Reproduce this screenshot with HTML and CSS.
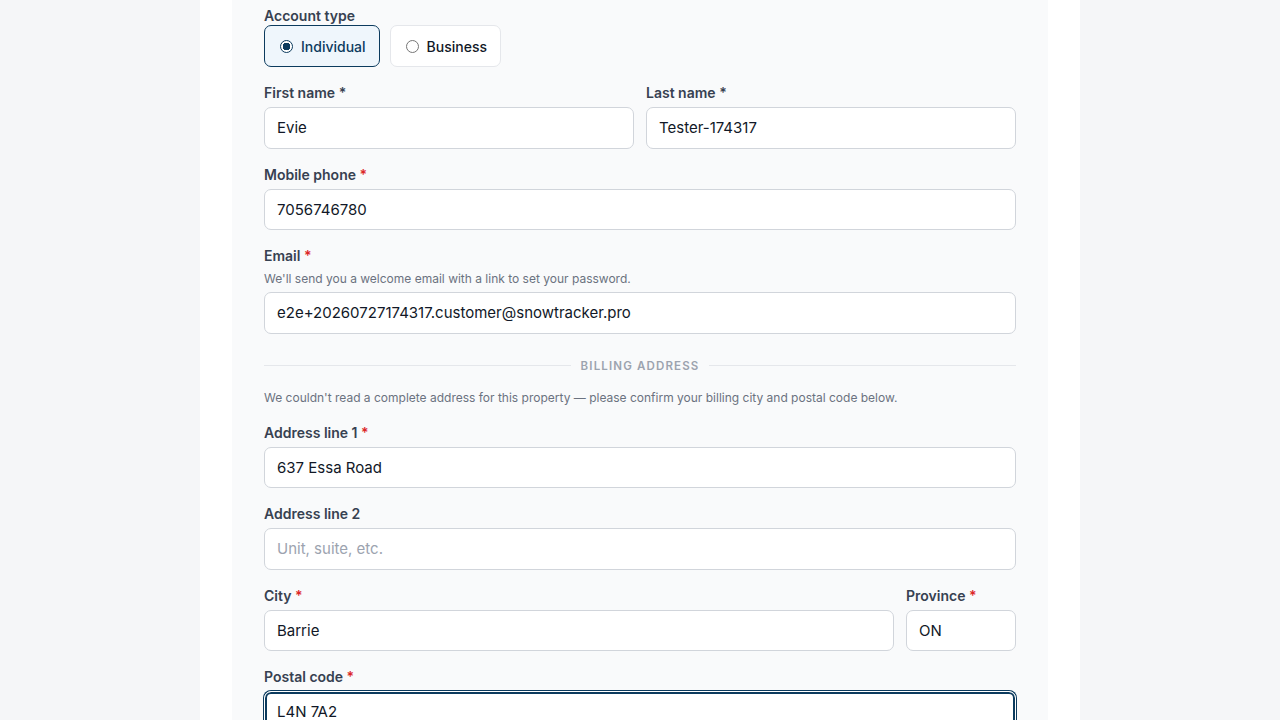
FILE: index.html
```html
<!DOCTYPE html>
<html lang="en">
<head>
<meta charset="utf-8">
<title>Customer</title>
<link rel="stylesheet" href="styles.css">
</head>
<body>
<div class="page">
  <div class="card">
    <div class="panel">
      <form class="form">
        <div class="field account">
          <div class="label">Account type</div>
          <div class="radios">
            <label class="radio selected"><span class="dot"></span>Individual</label>
            <label class="radio"><span class="dot"></span>Business</label>
          </div>
        </div>
        <div class="row">
          <div class="field grow">
            <div class="label">First name *</div>
            <div class="input">Evie</div>
          </div>
          <div class="field grow">
            <div class="label">Last name *</div>
            <div class="input">Tester-174317</div>
          </div>
        </div>
        <div class="field">
          <div class="label">Mobile phone <span class="req">*</span></div>
          <div class="input">7056746780</div>
        </div>
        <div class="field">
          <div class="label">Email <span class="req">*</span></div>
          <div class="help">We'll send you a welcome email with a link to set your password.</div>
          <div class="input">e2e+20260727174317.customer@snowtracker.pro</div>
        </div>
        <div class="divider"><span class="line"></span><span class="dtext">BILLING ADDRESS</span><span class="line"></span></div>
        <div class="note">We couldn't read a complete address for this property — please confirm your billing city and postal code below.</div>
        <div class="field">
          <div class="label">Address line 1 <span class="req">*</span></div>
          <div class="input">637 Essa Road</div>
        </div>
        <div class="field">
          <div class="label">Address line 2</div>
          <div class="input placeholder">Unit, suite, etc.</div>
        </div>
        <div class="row">
          <div class="field grow">
            <div class="label">City <span class="req">*</span></div>
            <div class="input">Barrie</div>
          </div>
          <div class="field prov">
            <div class="label">Province <span class="req">*</span></div>
            <div class="input">ON</div>
          </div>
        </div>
        <div class="field">
          <div class="label">Postal code <span class="req">*</span></div>
          <div class="input focus">L4N 7A2</div>
        </div>
      </form>
    </div>
  </div>
</div>
</body>
</html>
```

FILE: styles.css
```css
* { box-sizing: border-box; }
html, body { margin: 0; padding: 0; }
body {
  background: #f5f6f8;
  font-family: Inter, "Noto Sans", sans-serif;
  color: #111827;
  height: 720px;
  overflow: hidden;
}
.page {
  display: flex;
  justify-content: center;
}
.card {
  width: 880px;
  background: #ffffff;
  padding: 0 32px;
  min-height: 720px;
}
.panel {
  background: #f9fafb;
  padding: 6px 32px 40px;
  min-height: 760px;
}
.form {
  display: flex;
  flex-direction: column;
  gap: 16px;
}
.row {
  display: flex;
  gap: 12px;
}
.grow { flex: 1; }
.prov { width: 110px; }
.field {
  display: flex;
  flex-direction: column;
}
.label {
  font-size: 14px;
  line-height: 20px;
  font-weight: 600;
  color: #374151;
  margin-bottom: 4px;
}
.account .label { margin-bottom: -1px; }
.req { color: #dc2626; }
.help {
  font-size: 12px;
  line-height: 16px;
  color: #6b7280;
  margin-bottom: 5px;
  margin-top: 1px;
}
.input {
  height: 41.5px;
  border: 1px solid #d1d5db;
  border-radius: 7px;
  background: #ffffff;
  padding: 0 12px;
  display: flex;
  align-items: center;
  font-size: 15px;
  color: #111827;
}
.input.placeholder { color: #9ca3af; }
.input.focus {
  border-color: #ffffff;
  box-shadow: 0 0 0 1px #0c3b5e, inset 0 0 0 2px #0c3b5e;
}
.radios {
  display: flex;
  gap: 10px;
}
.radio {
  height: 42px;
  display: flex;
  align-items: center;
  gap: 8px;
  padding: 0 13px 0 15px;
  border: 1px solid #e5e7eb;
  border-radius: 7px;
  background: #ffffff;
  font-size: 14px;
  font-weight: 500;
  color: #111827;
}
.radio .dot {
  width: 13px;
  height: 13px;
  border-radius: 50%;
  border: 1px solid #767676;
  background: #fff;
}
.radio.selected {
  border-color: #0c3b5e;
  background: #eff6fc;
  color: #0c3b5e;
}
.radio.selected .dot {
  border: 1px solid #0c3b5e;
  background: radial-gradient(circle, #0c3b5e 0 3.6px, #ffffff 4px);
}
.divider {
  display: flex;
  align-items: center;
  gap: 10px;
  margin-top: 8px;
  height: 16px;
}
.divider .line {
  flex: 1;
  height: 1px;
  background: #e5e7eb;
}
.dtext {
  font-size: 11.5px;
  font-weight: 600;
  letter-spacing: 0.1em;
  color: #9ca3af;
}
.note {
  font-size: 12px;
  line-height: 16px;
  color: #6b7280;
  margin-bottom: 1px;
}
```
